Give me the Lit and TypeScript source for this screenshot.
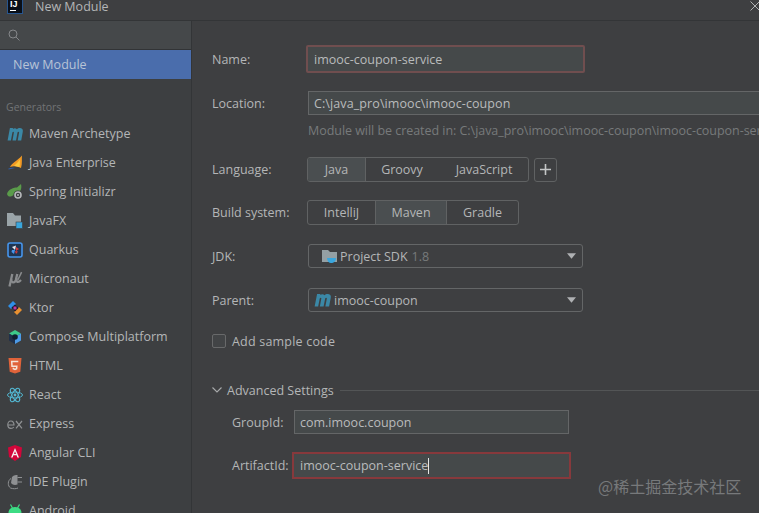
import { LitElement, html, css } from "lit";
import { customElement } from "lit/decorators.js";

const mIcon = (w = 17, h = 14) => html`<svg width=${w} height=${h} viewBox="0 0 16 13" preserveAspectRatio="none"><path d="M.6 12.6 L2.9 1 H6 L5.9 1.9 C6.8 .9 8.8 .6 9.9 2 C11 .8 14 .4 15.3 1.8 C16 2.6 15.9 3.8 15.7 4.8 L14.2 12.6 H10.7 L12.1 5.2 C12.2 4.3 11 4.1 10.5 5 L9 12.6 H5.5 L6.9 5.2 C7 4.3 5.9 4.1 5.4 5 L3.9 12.6 Z" fill="#3b88a6"/></svg>`;

const icons: Record<string, unknown> = {
  maven: mIcon(),
  javaee: html`<svg width="16" height="16" viewBox="0 0 16 16"><path d="M3 12 C5 8 10 6 15 .5 C14.5 4 15.5 8 14 13 C10 11 6 11 3 12Z" fill="#f29a24"/><path d="M7 11 C9 9 11 7 13 4.5 C12.8 7 13 9 12.5 12 Z" fill="#fbc63c"/><path d="M1.5 13.5 C4 12.5 6 12.5 8 13 C6 13.5 4 14 1.5 14.5Z" fill="#2f5fa8"/></svg>`,
  spring: html`<svg width="16" height="16" viewBox="0 0 16 16"><path d="M0 10 C1 5 7 3.5 10 3.5 L14 0 C15 4 14 8 10 9 L5 12 C3 13 1 13 0 10Z" fill="#5a9b4a"/><circle cx="11" cy="11" r="4.6" fill="#3d3f41"/><circle cx="11" cy="11" r="3" fill="none" stroke="#b6b8ba" stroke-width="1.6"/><circle cx="11" cy="11" r="1" fill="#b6b8ba"/></svg>`,
  javafx: html`<svg width="16" height="16" viewBox="0 0 16 16"><path d="M0 0 H6 L8 2.5 H14 V13 H0Z" fill="#9aa4a8"/><rect x="9" y="9" width="6.5" height="6.5" fill="#3aa6dd" stroke="#3d3f41" stroke-width=".6"/></svg>`,
  quarkus: html`<svg width="16" height="16" viewBox="0 0 16 16"><rect x="1" y="1" width="14" height="14" rx="2" fill="#1f3552" stroke="#4695eb" stroke-width="1.6"/><path d="M5 5 L9 3.5 L8 8 Z" fill="#e8e8ee"/><path d="M9 5 L12 7 L9 9 Z" fill="#d83a3a"/><path d="M5 8 L8 8 L7 12 L4.5 10 Z" fill="#4695eb"/><path d="M8 9 L11 9.5 L9 12Z" fill="#d83a3a"/></svg>`,
  micronaut: html`<svg width="16" height="16" viewBox="0 0 16 16" fill="none" stroke="#8a8c8e" stroke-width="2.3"><path d="M2.5 15.5 L5.3 3"/><path d="M4.4 8 C3.6 12 7.6 12.6 8.8 9 L10.3 3"/><path d="M9.5 7 C8.8 11.5 11.2 12 14 9"/><path d="M10.8 9 L14.6 1.2" stroke-width="1.5"/></svg>`,
  ktor: html`<svg width="16" height="16" viewBox="0 0 16 16"><path d="M1 6 L6 1 L9 4 L4 9Z" fill="#2f8fe8"/><path d="M7 12 L12 7 L15 10 L10 15Z" fill="#e89030"/><path d="M4.5 7.5 L8 4.5 L11.5 8 L8 11.5Z" fill="#1a1a2a"/><rect x="6.5" y="6.5" width="3" height="3" fill="#c23a9a"/></svg>`,
  compose: html`<svg width="16" height="16" viewBox="0 0 16 16"><path d="M8 1 L14 4.5 L8 8 L2 4.5Z" fill="#3dc98a"/><path d="M14 4.5 V11.5 L8 15 V8Z" fill="#4d9be8"/><path d="M2 4.5 L8 8 V15 L2 11.5Z" fill="#20304a"/><circle cx="8" cy="8" r="2.8" fill="#10202f"/></svg>`,
  htmlIcon: html`<svg width="16" height="16" viewBox="0 0 16 16"><path d="M1.5 0 H14.5 L13.3 13.8 L8 15.5 L2.7 13.8Z" fill="#e0633a"/><path d="M11.3 3.5 H4.7 L5 8.2 H9.8 L9.6 10.8 L8 11.4 L6.4 10.8 L6.3 9.8" fill="none" stroke="#f4e4d8" stroke-width="1.5"/></svg>`,
  react: html`<svg width="16" height="16" viewBox="0 0 16 16" fill="none" stroke="#53b6d0" stroke-width="1"><ellipse cx="8" cy="8" rx="7.5" ry="3"/><ellipse cx="8" cy="8" rx="7.5" ry="3" transform="rotate(60 8 8)"/><ellipse cx="8" cy="8" rx="7.5" ry="3" transform="rotate(120 8 8)"/><circle cx="8" cy="8" r="1.4" fill="#53b6d0" stroke="none"/></svg>`,
  express: html`<svg width="16" height="16" viewBox="0 0 16 16" fill="none" stroke="#8f9193" stroke-width="1.2"><path d="M.8 9 H7 C7 6.4 5.8 5 3.9 5 C2 5 .8 6.6 .8 8.8 C.8 11 2 12.4 4 12.4 C5.2 12.4 6 12 6.8 11"/><path d="M9 5 L15 12.4 M15 5 L9 12.4"/></svg>`,
  angular: html`<svg width="16" height="16" viewBox="0 0 16 16"><path d="M8 0 L15 2.5 L14 12 L8 16 L2 12 L1 2.5Z" fill="#d3063a"/><path d="M8 3 L12 12.5 H10.4 L9.6 10.3 H6.4 L5.6 12.5 H4Z M8 6.3 L7 9 H9Z" fill="#f4f0f0" fill-rule="evenodd"/></svg>`,
  plugin: html`<svg width="16" height="16" viewBox="0 0 16 16" fill="none"><path d="M5 3 C7 1 9 1 10.5 1 V10.5 C8 11.5 5.5 11 4 9 Z" fill="#8f9193"/><path d="M10.5 3.5 H15 M10.5 8 H15" stroke="#8f9193" stroke-width="1.2"/><path d="M4 4.5 C.5 6.5 .5 12 3.5 14 C6 15 9 15 11 14" stroke="#8f9193" stroke-width="1"/></svg>`,
  android: html`<svg width="16" height="16" viewBox="0 0 16 16"><path d="M1.5 10 C1.5 6 4.5 4 8 4 C11.5 4 14.5 6 14.5 10Z M1.5 11 H14.5 V16 H1.5Z" fill="#3ddc84"/><path d="M3.5 1.5 L5.5 5 M12.5 1.5 L10.5 5" stroke="#3ddc84" stroke-width="1.2"/></svg>`,
};

const generators: [string, string][] = [
  ["maven", "Maven Archetype"],
  ["javaee", "Java Enterprise"],
  ["spring", "Spring Initializr"],
  ["javafx", "JavaFX"],
  ["quarkus", "Quarkus"],
  ["micronaut", "Micronaut"],
  ["ktor", "Ktor"],
  ["compose", "Compose Multiplatform"],
  ["htmlIcon", "HTML"],
  ["react", "React"],
  ["express", "Express"],
  ["angular", "Angular CLI"],
  ["plugin", "IDE Plugin"],
  ["android", "Android"],
];

@customElement("app-root")
export class AppRoot extends LitElement {
  static styles = css`
    :host {
      display: block;
      width: 759px;
      height: 513px;
      overflow: hidden;
      position: relative;
      background: #3e3f41;
      color: #b4b6b7;
      font-family: "Open Sans", "Noto Sans", sans-serif;
      font-size: 12.5px;
    }
    .titlebar {
      height: 20px;
      display: flex;
      align-items: flex-start;
      border-bottom: 1px solid #333537;
      overflow: hidden;
    }
    .logo {
      width: 16px;
      height: 14px;
      margin-left: 7px;
      box-sizing: border-box;
      background: #0a0f18;
      border: 1.5px solid #27558f;
      border-top: 0;
      color: #fff;
      font: bold 9px/9px "Liberation Sans", sans-serif;
      padding-left: 2px;
      display: flex;
      flex-direction: column;
    }
    .logo i {
      display: block;
      width: 6px;
      height: 1px;
      background: #fff;
      margin-top: 1px;
    }
    .title {
      margin-left: 12px;
      line-height: 13px;
      flex: 1;
    }
    .close { margin-top: 1px; flex: none; transform: translateX(1px); }
    .body {
      display: grid;
      grid-template-columns: 192px 1fr;
      height: 492px;
    }
    .side {
      background: #3d3f41;
      border-right: 1px solid #333537;
      box-sizing: border-box;
      overflow: hidden;
    }
    .search {
      height: 28px;
      background: #45484a;
      border-bottom: 1px solid #323436;
      display: flex;
      align-items: center;
      padding-left: 8px;
    }
    .selected {
      height: 29px;
      background: #4a6dac;
      color: #b8c4d6;
      display: flex;
      align-items: center;
      padding-left: 13px;
    }
    .group {
      color: #727476;
      font-size: 10.5px;
      margin: 20px 0 0 6px;
      height: 16px;
      line-height: 16px;
    }
    .list { margin-top: 4px; }
    .item {
      height: 29px;
      display: flex;
      align-items: center;
      padding-left: 7px;
      gap: 6px;
      white-space: nowrap;
    }
    .ic { width: 16px; height: 16px; display: flex; align-items: center; flex: none; }
    .main {
      padding: 25px 0 0 20px;
      overflow: hidden;
      display: flex;
      flex-direction: column;
      min-width: 0;
    }
    .row {
      display: flex;
      align-items: center;
      height: 26px;
      white-space: nowrap;
      flex: none;
    }
    .tall { height: 25px; }
    .label { width: 96px; flex: none; }
    .field {
      box-sizing: border-box;
      height: 24px;
      background: #45494a;
      border: 1px solid #646667;
      display: flex;
      align-items: center;
      padding-left: 5px;
      color: #b9bbbc;
    }
    .err {
      border: 2px solid #704e4f;
      border-radius: 2px;
      height: 28px;
      width: 279px;
      margin-left: -2px;
      padding-left: 6px;
    }
    .m18 { margin-top: 18px; }
    .loc { width: 460px; flex: none; border-width: 1px 0 1px 1px; letter-spacing: .1px; }
    .hint {
      margin: 6px 0 0 96px;
      height: 17px;
      line-height: 17px;
      white-space: nowrap;
      color: #777a7b;
      letter-spacing: -.04px;
      flex: none;
    }
    .seg {
      display: flex;
      height: 25px;
      box-sizing: border-box;
      border: 1px solid #606263;
      border-radius: 3px;
      margin-left: -1px;
      overflow: hidden;
    }
    .seg span {
      display: flex;
      align-items: center;
      justify-content: center;
      box-sizing: border-box;
    }
    .seg .on {
      background: #4a4e50;
      border-left: 1px solid #606263;
      border-right: 1px solid #606263;
    }
    .seg .on.first { border-left: 0; }
    .plus {
      width: 23px;
      height: 24px;
      box-sizing: border-box;
      border: 1px solid #606263;
      border-radius: 3px;
      margin-left: 5px;
      display: flex;
      align-items: center;
      justify-content: center;
    }
    .select {
      box-sizing: border-box;
      width: 275px;
      height: 24px;
      border: 1px solid #646667;
      border-radius: 3px;
      display: flex;
      align-items: center;
      gap: 4px;
    }
    .select .arrow {
      margin-left: auto;
      margin-right: 6px;
      flex: none;
    }
    .dim { color: #777a7b; }
    .check {
      display: flex;
      align-items: center;
      gap: 6px;
      height: 20px;
      margin-top: 18px;
      letter-spacing: .2px;
      flex: none;
    }
    .box {
      width: 14px;
      height: 14px;
      box-sizing: border-box;
      border: 1px solid #68696a;
      border-radius: 2px;
      background: #424446;
    }
    .adv {
      display: flex;
      align-items: center;
      height: 18px;
      margin-top: 30px;
      white-space: nowrap;
      flex: none;
    }
    .adv svg { margin-right: 5px; flex: none; }
    .adv .line { flex: 1; height: 1px; background: #535556; margin-left: 6px; }
    .sub { padding-left: 20px; }
    .gid-row { margin-top: 11px; height: 24px; }
    .aid-row { margin-top: 18px; height: 27px; }
    .gid-label { width: 62px; }
    .aid-label { width: 60px; }
    .gid { width: 275px; }
    .aid {
      width: 279px;
      height: 27px;
      border: 2px solid #87393c;
      padding-left: 6px;
    }
    .caret {
      display: inline-block;
      width: 1px;
      height: 16px;
      background: #e6e6e6;
    }
    .sdk-icon { margin-left: 13px; }
    .sdk-text { margin-left: -1px; }
    .parent-icon { margin-left: 5px; margin-right: -1px; display: flex; }
    .w58 { width: 58px; }
    .w72 { width: 72px; }
    .seg .w90 { width: 90px; padding-left: 2px; }
    .w67 { width: 67px; }
    .w71 { width: 71px; }
    .mark {
      position: absolute;
      left: 598px;
      top: 477px;
      font: 16px/18px "Noto Sans CJK SC", sans-serif;
      color: #77797b;
      white-space: nowrap;
    }
  `;

  render() {
    const arrow = html`<svg class="arrow" width="9" height="6" viewBox="0 0 10 6"><path d="M0 0 H10 L5 6Z" fill="#afb1b3"/></svg>`;
    return html`
      <div class="titlebar">
        <div class="logo">IJ<i></i></div>
        <div class="title">New Module</div>
        <svg class="close" width="10" height="10" viewBox="0 0 10 10" stroke="#b0b2b3" fill="none"><path d="M.5 .5 L9.5 9.5 M9.5 .5 L.5 9.5"/></svg>
      </div>
      <div class="body">
        <div class="side">
          <div class="search">
            <svg width="12" height="12" viewBox="0 0 12 12" fill="none" stroke="#85878a" stroke-width="1"><circle cx="5" cy="5" r="4"/><path d="M8 8 L11.5 11.5"/></svg>
          </div>
          <div class="selected">New Module</div>
          <div class="group">Generators</div>
          <div class="list">
            ${generators.map(
              ([k, t]) => html`<div class="item"><span class="ic">${icons[k]}</span>${t}</div>`
            )}
          </div>
        </div>
        <div class="main">
          <div class="row">
            <div class="label">Name:</div>
            <div class="field err">imooc-coupon-service</div>
          </div>
          <div class="row m18">
            <div class="label">Location:</div>
            <div class="field loc">C:\\java_pro\\imooc\\imooc-coupon</div>
          </div>
          <div class="hint">Module will be created in: C:\\java_pro\\imooc\\imooc-coupon\\imooc-coupon-service</div>
          <div class="row tall m18">
            <div class="label">Language:</div>
            <div class="seg">
              <span class="on first w58">Java</span>
              <span class="w72">Groovy</span>
              <span class="w90">JavaScript</span>
            </div>
            <div class="plus"><svg width="11" height="11" viewBox="0 0 11 11" stroke="#c4c6c7" stroke-width="1.6"><path d="M5.5 0 V11 M0 5.5 H11"/></svg></div>
          </div>
          <div class="row tall m18">
            <div class="label">Build system:</div>
            <div class="seg">
              <span class="w67">IntelliJ</span>
              <span class="on w72">Maven</span>
              <span class="w71">Gradle</span>
            </div>
          </div>
          <div class="row m18">
            <div class="label">JDK:</div>
            <div class="select">
              <svg class="sdk-icon" width="15" height="15" viewBox="0 0 15 15"><path d="M0 1 H6 L8 3 H15 V13 H0Z" fill="#94a0a4"/><path d="M5 9 H14 C14 12 12 14 9 14 C7 14 5 12 5 9Z" fill="#3aa6dd"/></svg>
              <span class="sdk-text">Project SDK</span><span class="dim">1.8</span>
              ${arrow}
            </div>
          </div>
          <div class="row m18">
            <div class="label">Parent:</div>
            <div class="select">
              <span class="parent-icon">${mIcon()}</span>
              <span>imooc-coupon</span>
              ${arrow}
            </div>
          </div>
          <div class="check"><div class="box"></div>Add sample code</div>
          <div class="adv">
            <svg width="10" height="6" viewBox="0 0 10 6" fill="none" stroke="#a8aaab" stroke-width="1.1"><path d="M.5 .5 L5 5 L9.5 .5"/></svg>
            Advanced Settings
            <div class="line"></div>
          </div>
          <div class="row sub gid-row">
            <div class="gid-label">GroupId:</div>
            <div class="field gid">com.imooc.coupon</div>
          </div>
          <div class="row sub aid-row">
            <div class="aid-label">ArtifactId:</div>
            <div class="field aid">imooc-coupon-service<span class="caret"></span></div>
          </div>
        </div>
      </div>
      <div class="mark">@稀土掘金技术社区</div>
    `;
  }
}
